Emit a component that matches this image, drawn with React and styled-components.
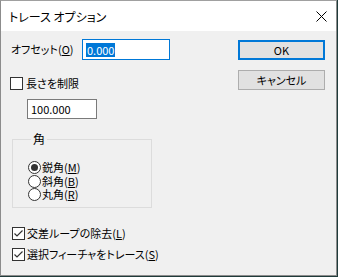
import React from "react";
import styled, { createGlobalStyle } from "styled-components";

const Global = createGlobalStyle`
  html, body { margin: 0; padding: 0; background: #1f3b3a; }
  body { width: 338px; height: 277px; overflow: hidden; }
  * { box-sizing: border-box; }
`;

const FONT = `"Noto Sans CJK JP", "Noto Sans", sans-serif`;

const Dialog = styled.div`
  width: 337px;
  height: 276px;
  border: 1px solid #8c8c8c;
  border-top-color: #a0a0a0;
  background: #f0f0f0;
  display: flex;
  flex-direction: column;
  font-family: ${FONT};
  font-size: 11px;
  color: #000;
  font-feature-settings: "palt";
`;

const TitleBar = styled.div`
  height: 30px;
  background: #fff;
  display: flex;
  align-items: center;
  padding-left: 8px;
  padding-right: 9px;
  font-size: 12px;
  flex-shrink: 0;
`;

const Title = styled.span`
  flex: 1;
`;

const CloseIcon = () => (
  <svg width="11" height="11" viewBox="0 0 11 11">
    <path d="M0.5 0.5 L10.5 10.5 M10.5 0.5 L0.5 10.5" stroke="#000" strokeWidth="1" fill="none" />
  </svg>
);

const Body = styled.div`
  flex: 1;
  display: flex;
  padding: 0 11px 0 9px;
`;

const LeftCol = styled.div`
  display: flex;
  flex-direction: column;
  width: 200px;
`;

const RightCol = styled.div`
  margin-left: auto;
  display: flex;
  flex-direction: column;
  gap: 10px;
  padding-top: 9px;
`;

const Row = styled.div`
  display: flex;
  align-items: center;
  margin-top: ${(p) => p.$mt || 0}px;
  margin-left: ${(p) => p.$ml || 0}px;
  height: ${(p) => p.$h || 13}px;
  white-space: nowrap;
`;

const Label = styled.span`
  width: ${(p) => p.$w || "auto"};
  padding-left: ${(p) => p.$pl || 0}px;
  line-height: 13px;
`;

const U = styled.span`
  text-decoration: underline;
  text-underline-offset: 1px;
`;

const TextBox = styled.div`
  width: ${(p) => p.$w}px;
  height: ${(p) => p.$h}px;
  border: 1px solid ${(p) => (p.$focus ? "#0078d7" : "#7a7a7a")};
  background: #fff;
  display: flex;
  align-items: center;
  padding-left: 3px;
  font-size: 11px;
`;

const Selected = styled.span`
  background: #0078d7;
  color: #fff;
  line-height: 14px;
  padding: 0 1px;
`;

const Button = styled.div`
  width: 87px;
  height: 20px;
  background: #e1e1e1;
  border: ${(p) => (p.$default ? "2px solid #0078d7" : "1px solid #adadad")};
  display: flex;
  align-items: center;
  justify-content: center;
  font-size: 11px;
  line-height: 13px;
`;

const Box = styled.span`
  width: 13px;
  height: 13px;
  border: 1px solid #333;
  background: #fff;
  display: inline-flex;
  align-items: center;
  justify-content: center;
  flex-shrink: 0;
`;

const Check = () => (
  <svg width="11" height="11" viewBox="0 0 11 11">
    <path d="M1.5 5.5 L4 8 L9.5 2.5" stroke="#333" strokeWidth="1.2" fill="none" />
  </svg>
);

const Radio = styled.span`
  width: 13px;
  height: 13px;
  border: 1px solid #333;
  border-radius: 50%;
  background: #fff;
  display: inline-flex;
  align-items: center;
  justify-content: center;
  flex-shrink: 0;
  &::after {
    content: "";
    width: 7px;
    height: 7px;
    border-radius: 50%;
    background: ${(p) => (p.$on ? "#333" : "transparent")};
  }
`;

const Group = styled.fieldset`
  margin: 13px 0 0 2px;
  width: 140px;
  height: 76px;
  border: 1px solid #dcdcdc;
  padding: 0 0 0 15px;
  display: flex;
  flex-direction: column;
`;

const Legend = styled.legend`
  margin-left: 3px;
  padding: 0 2px 0 2px;
  font-size: 12px;
  line-height: 14px;
`;

const RadioList = styled.div`
  display: flex;
  flex-direction: column;
  margin-top: 15px;
`;

const RadioRow = styled.div`
  display: flex;
  align-items: center;
  height: 13.5px;
  white-space: nowrap;
  font-size: 11px;
`;

const Checks = styled.div`
  display: flex;
  flex-direction: column;
  gap: 8px;
  margin-top: 19px;
  margin-left: 2px;
`;

export default function App() {
  return (
    <>
      <Global />
      <Dialog>
        <TitleBar>
          <Title>トレース オプション</Title>
          <CloseIcon />
        </TitleBar>
        <Body>
          <LeftCol>
            <Row $mt={8} $h={21}>
              <Label $w="72px" $pl={1}>
                オフセット(<U>O</U>)
              </Label>
              <TextBox $w={88} $h={21} $focus>
                <Selected>0.000</Selected>
              </TextBox>
            </Row>
            <Row $mt={17}>
              <Box />
              <Label $pl={3}>長さを制限</Label>
            </Row>
            <Row $mt={9} $ml={17} $h={20}>
              <TextBox $w={70} $h={20}>
                <span>100.000</span>
              </TextBox>
            </Row>
            <Group>
              <Legend>角</Legend>
              <RadioList>
                <RadioRow>
                  <Radio $on />
                  <Label $pl={1}>
                    鋭角(<U>M</U>)
                  </Label>
                </RadioRow>
                <RadioRow>
                  <Radio />
                  <Label $pl={1}>
                    斜角(<U>B</U>)
                  </Label>
                </RadioRow>
                <RadioRow>
                  <Radio />
                  <Label $pl={1}>
                    丸角(<U>R</U>)
                  </Label>
                </RadioRow>
              </RadioList>
            </Group>
            <Checks>
              <Row>
                <Box>
                  <Check />
                </Box>
                <Label $pl={2}>
                  交差ループの除去(<U>L</U>)
                </Label>
              </Row>
              <Row>
                <Box>
                  <Check />
                </Box>
                <Label $pl={2}>
                  選択フィーチャをトレース(<U>S</U>)
                </Label>
              </Row>
            </Checks>
          </LeftCol>
          <RightCol>
            <Button $default>OK</Button>
            <Button>キャンセル</Button>
          </RightCol>
        </Body>
      </Dialog>
    </>
  );
}
